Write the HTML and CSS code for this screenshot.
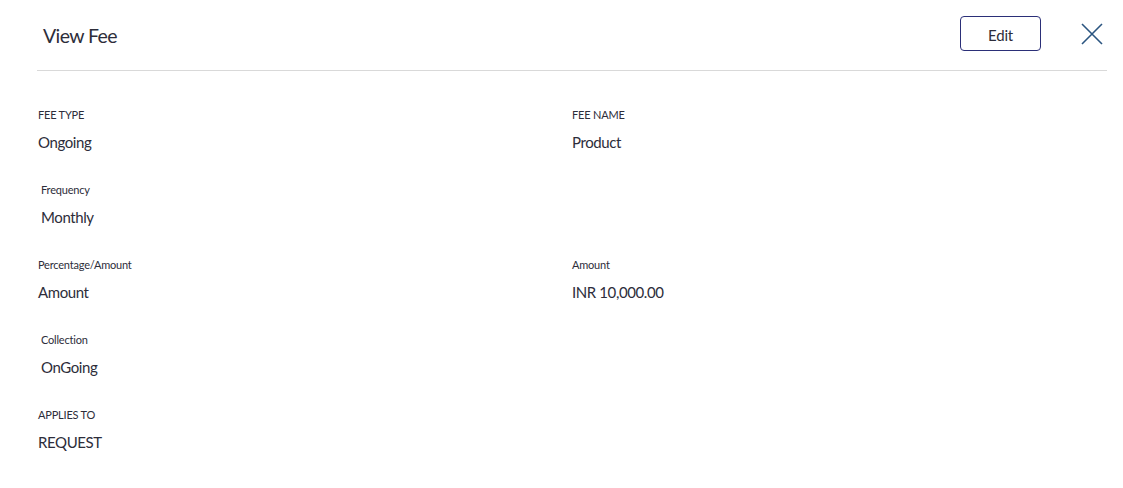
FILE: index.html
```html
<!DOCTYPE html>
<html>
<head>
<meta charset="utf-8">
<link rel="stylesheet" href="styles.css">
</head>
<body>
<div class="modal">
  <header class="head">
    <h1 class="title">View Fee</h1>
    <div class="actions">
      <button class="edit">Edit</button>
      <button class="close" aria-label="Close">
        <svg width="22" height="22" viewBox="0 0 22 22"><path d="M1 1L21 21M21 1L1 21" stroke="#2b5580" stroke-width="1.6" fill="none"/></svg>
      </button>
    </div>
  </header>
  <div class="body">
    <div class="row">
      <div class="field"><div class="label">FEE TYPE</div><div class="value">Ongoing</div></div>
      <div class="field"><div class="label">FEE NAME</div><div class="value">Product</div></div>
    </div>
    <div class="row">
      <div class="field indent"><div class="label">Frequency</div><div class="value">Monthly</div></div>
    </div>
    <div class="row">
      <div class="field"><div class="label">Percentage/Amount</div><div class="value">Amount</div></div>
      <div class="field"><div class="label">Amount</div><div class="value">INR 10,000.00</div></div>
    </div>
    <div class="row">
      <div class="field indent"><div class="label">Collection</div><div class="value">OnGoing</div></div>
    </div>
    <div class="row">
      <div class="field"><div class="label">APPLIES TO</div><div class="value">REQUEST</div></div>
    </div>
  </div>
</div>
</body>
</html>
```
FILE: styles.css
```css
* { box-sizing: border-box; }
body {
  margin: 0;
  background: #fff;
  font-family: Lato, "Open Sans", sans-serif;
  color: #2d2d3a;
}
.modal {
  width: 1123px;
  height: 488px;
  padding: 0 16px 0 37px;
}
.head {
  display: flex;
  align-items: center;
  justify-content: space-between;
  height: 71px;
  border-bottom: 1px solid #d9d9d9;
  padding: 0 4px 1px 6px;
}
.title {
  margin: 0;
  font-size: 19.5px;
  letter-spacing: -0.6px;
  font-weight: 400;
  color: #2d2d3a;
  position: relative;
  top: 1px;
}
.actions {
  display: flex;
  align-items: center;
  gap: 40px;
}
.edit {
  width: 81px;
  height: 35px;
  border: 1px solid #2b2f78;
  border-radius: 4px;
  background: #fff;
  font-family: inherit;
  font-size: 15px;
  letter-spacing: -0.2px;
  color: #2d2d3a;
  padding: 3px 0 0;
  position: relative;
  top: -1px;
}
.close {
  border: 0;
  background: none;
  padding: 0;
  width: 22px;
  height: 22px;
  display: flex;
  position: relative;
  top: -1px;
}
.body {
  padding-top: 37px;
  padding-left: 1px;
}
.row {
  display: grid;
  grid-template-columns: 534px 1fr;
  height: 75px;
}
.field.indent { padding-left: 3px; }
.label {
  font-size: 11px;
  line-height: 14px;
  letter-spacing: -0.2px;
  color: #2d2d3a;
}
.value {
  margin-top: 11px;
  font-size: 15px;
  line-height: 18px;
  letter-spacing: -0.4px;
  color: #2d2d3a;
}
```
